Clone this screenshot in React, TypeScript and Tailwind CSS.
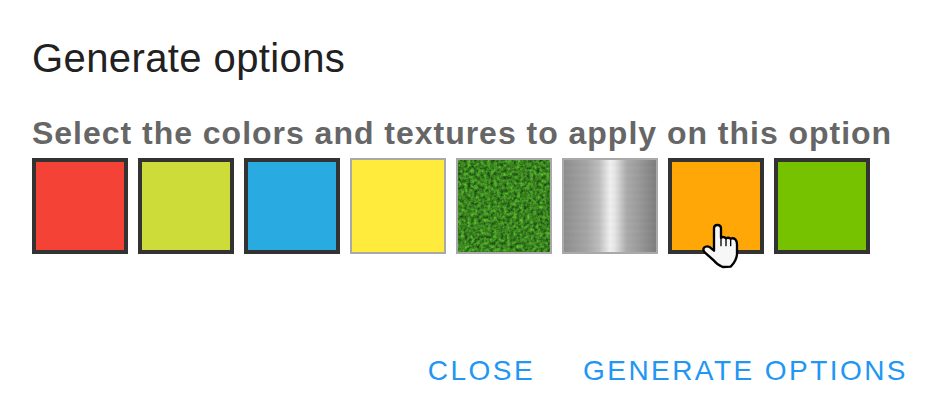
const swatches = ['bg-[#f44336]', 'bg-[#cddc39]', 'bg-[#29abe2]', 'bg-[#ffeb3b]', 'grass', 'metal', 'bg-[#ffa706]', 'bg-[#76c200]']

function Grass() {
  return (
    <svg className="block w-full h-full" viewBox="0 0 92 92">
      <filter id="grass" x="0" y="0" width="100%" height="100%" colorInterpolationFilters="sRGB">
        <feTurbulence type="fractalNoise" baseFrequency="0.3" numOctaves="3" seed="4" stitchTiles="stitch" />
        <feColorMatrix
          type="matrix"
          values="0.4 0 0 0 0.03
                  0.75 0 0 0 0.14
                  0.15 0 0 0 0.05
                  0 0 0 0 1"
        />
      </filter>
      <rect width="92" height="92" fill="#3f8f22" filter="url(#grass)" />
    </svg>
  )
}

function Hand() {
  return (
    <svg className="absolute left-[18px] top-[53px]" width="60" height="60" viewBox="0 0 180 180">
      <path
        d="M72 40 Q72 30 82 30 Q93 30 93 40 L93 68 Q101 63 108 70 Q115 66 122 71 Q130 68 136 73 Q141 78 141 88 L141 118 Q139 138 122 155 L98 156 Q82 150 70 135 L45 113 Q37 104 42 98 Q50 91 60 97 L72 107 Z"
        fill="#f7f7f7"
        stroke="#000"
        strokeWidth="7"
        strokeLinejoin="round"
      />
      <path d="M93 68 L93 92 M108 70 L108 92 M122 71 L122 92" fill="none" stroke="#000" strokeWidth="4" strokeLinecap="round" />
    </svg>
  )
}

export default function App() {
  return (
    <div className="w-[936px] h-[418px] bg-white flex flex-col pl-[32px] pr-[28px] font-['Liberation_Sans',Arial,sans-serif] overflow-hidden">
      <h1 className="mt-[35px] text-[40px] leading-[46px] tracking-[0.4px] text-[#212121]">Generate options</h1>
      <p className="mt-[33px] text-[32px] leading-[38px] font-bold tracking-[0.98px] text-[#666] whitespace-nowrap">
        Select the colors and textures to apply on this option
      </p>
      <div className="mt-[6px] flex gap-[10px]">
        {swatches.map((s, i) => {
          if (s === 'grass') {
            return (
              <div key={i} className="w-[96px] h-[96px] border-2 border-[#a9a9a9]">
                <Grass />
              </div>
            )
          }
          if (s === 'metal') {
            return (
              <div
                key={i}
                className="w-[96px] h-[96px] border-2 border-[#a9a9a9] bg-[repeating-linear-gradient(0deg,rgba(255,255,255,0.02)_0px,rgba(0,0,0,0.015)_3px,rgba(255,255,255,0.01)_7px),linear-gradient(90deg,#8e8e8e_0%,#a6a6a6_25%,#bdbdbd_38%,#f0f0f0_50%,#e6e6e6_55%,#ababab_68%,#9c9c9c_80%,#7e7e7e_100%)]"
              />
            )
          }
          if (i === 3) {
            return <div key={i} className={`w-[96px] h-[96px] border-2 border-[#a9a9a9] ${s}`} />
          }
          return (
            <div key={i} className={`relative w-[96px] h-[96px] border-4 border-[#333] ${s}`}>
              {i === 6 && <Hand />}
            </div>
          )
        })}
      </div>
      <div className="mt-auto mb-[30px] flex justify-end gap-[48px] text-[28px] leading-[34px] tracking-[2.45px] text-[#2196f3]">
        <span>CLOSE</span>
        <span>GENERATE OPTIONS</span>
      </div>
    </div>
  )
}
